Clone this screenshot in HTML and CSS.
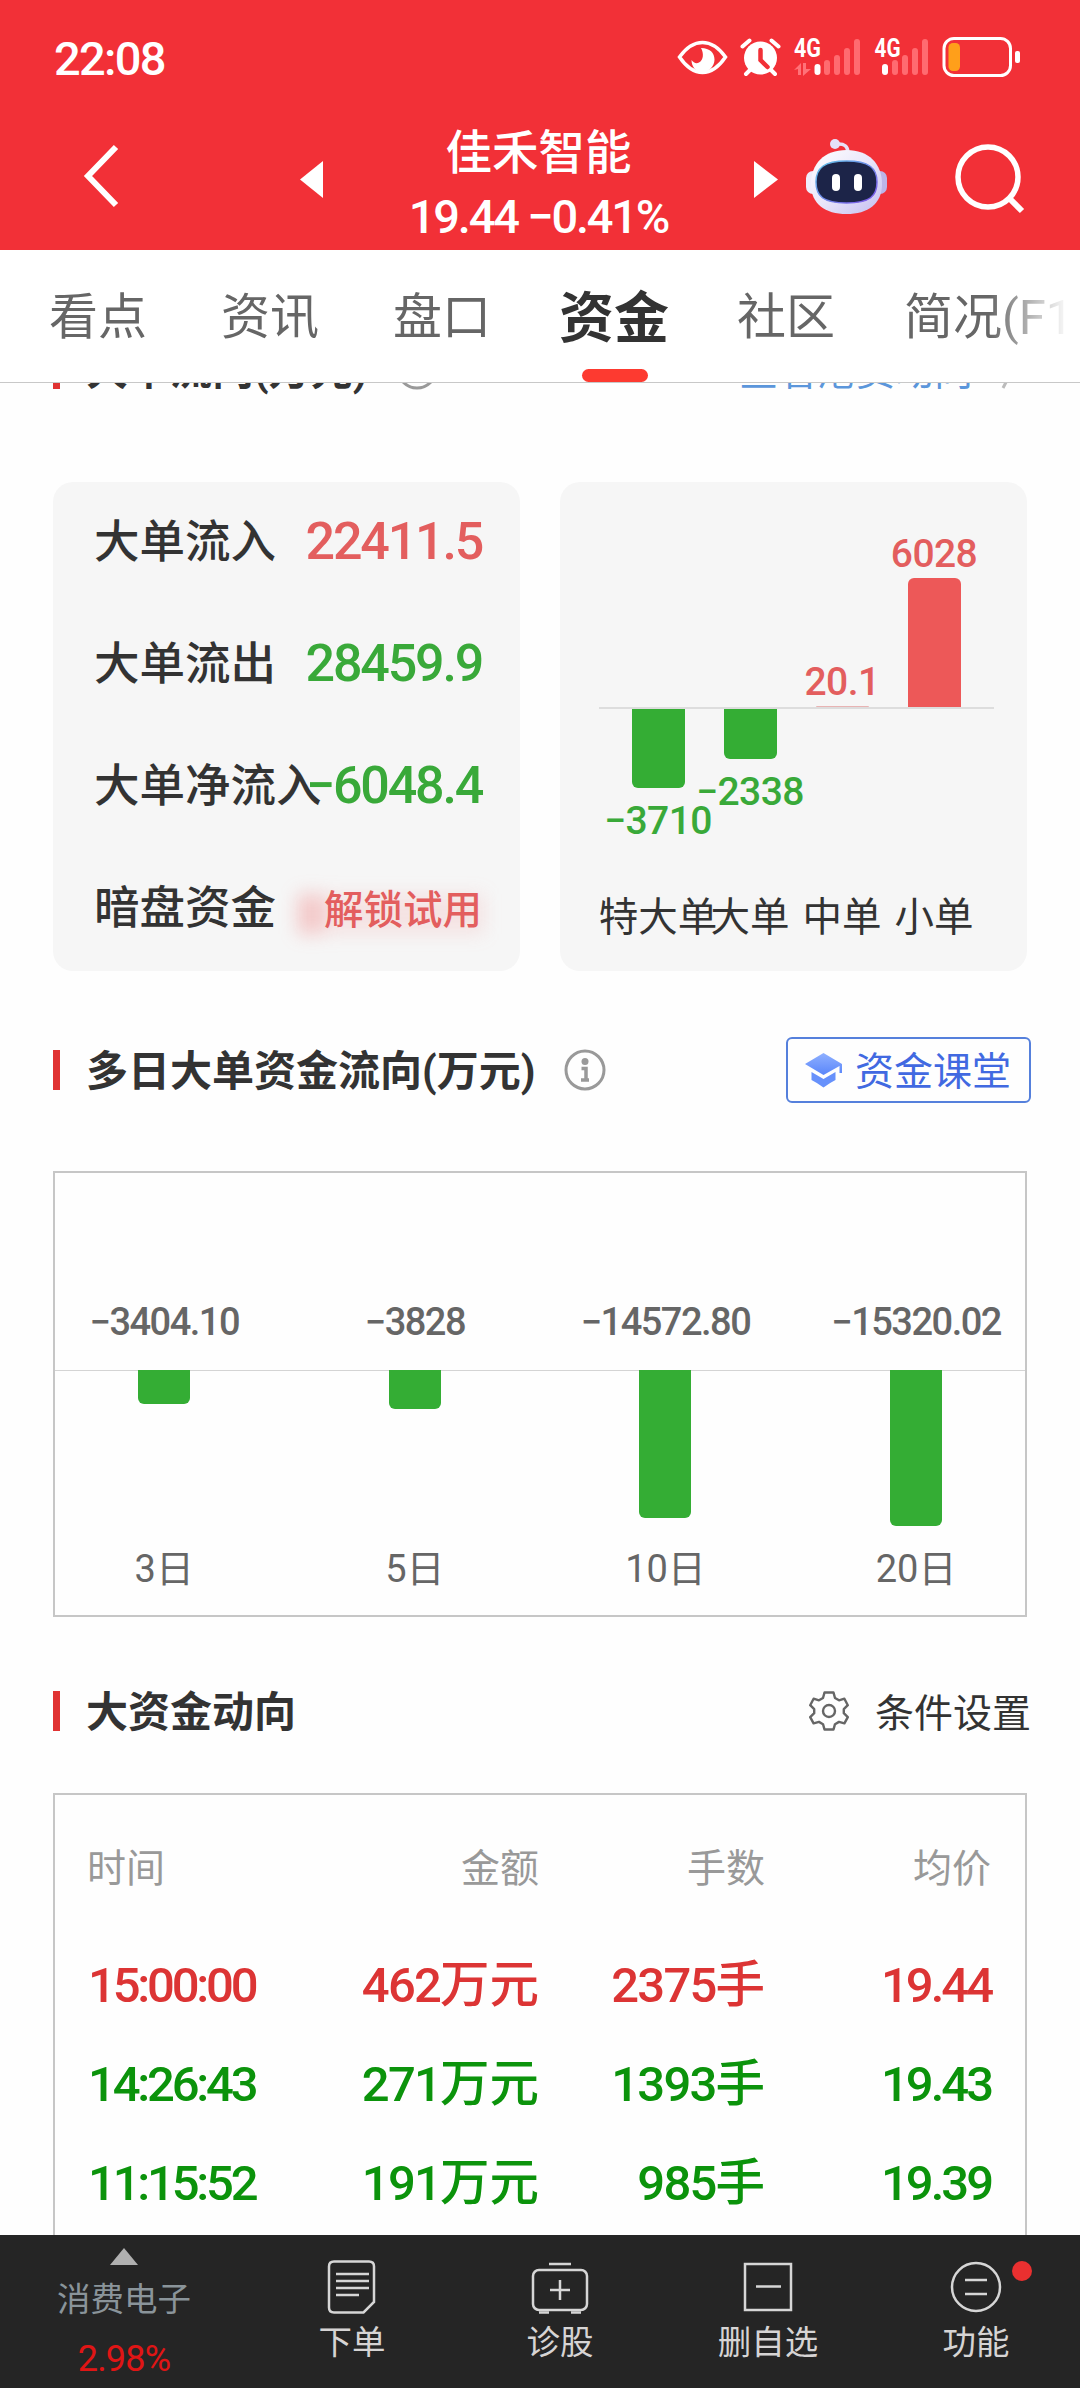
FILE: index.html
```html
<!DOCTYPE html>
<html lang="zh-CN">
<head>
    <meta charset="UTF-8">
    <meta name="viewport" content="width=device-width, initial-scale=1.0">
    <title>佳禾智能 - 资金</title>
    <link rel="stylesheet" href="styles.css">
</head>
<body>
<div class="page">

    <!-- Header -->
    <header class="header">
        <div class="status-bar">
            <span class="clock">22:08</span>
            <svg class="status-icons" width="346" height="44" viewBox="676 35 346 44" fill="none">
                <path d="M680.500 57Q691 42.500 703.500 42.500T726.500 57Q716 72.500 703.500 72.500T680.500 57Z" stroke="#fff" stroke-width="3.500"/>
                <path d="M702 48c9 0 13.500 5 13.500 11.500S710 72 703.500 72 692.500 67 692.500 60c2 3 5 4 7.500 2.500 4.500-2.500 5-9 2-14.500Z" fill="#fff"/>
                <circle cx="761.500" cy="58" r="16.500" fill="#fff"/>
                <path d="M743.500 46.500l7-6M779.500 46.500l-7-6M751 70l-4 4M772 70l4 4" stroke="#fff" stroke-width="4" stroke-linecap="round"/>
                <path d="M761.500 50v10l7 7" stroke="#f23037" stroke-width="4.500" stroke-linecap="round"/>
                <text x="795" y="57" class="net" textLength="27" lengthAdjust="spacingAndGlyphs">4G</text>
                <path d="M795 70l7-7v12h-3v-6zM804 63h3v6h5l-8 7z" fill="#ff7278"/>
                <g stroke-width="6" stroke-linecap="round">
                    <path d="M818.500 67v5" stroke="#fff"/>
                    <path d="M828 63v9M838 58v14M848 51v21M858 42v30" stroke="#ff6b70"/>
                    <path d="M886 67v5" stroke="#fff"/>
                    <path d="M896 63v9M906 58v14M916 51v21M926 42v30" stroke="#ff6b70"/>
                </g>
                <text x="875.500" y="57" class="net" textLength="26" lengthAdjust="spacingAndGlyphs">4G</text>
                <rect x="945" y="38.500" width="66.500" height="37" rx="10" stroke="#fff" stroke-width="3"/>
                <rect x="949.500" y="43" width="11.500" height="28" rx="4.500" fill="#ff9f1a"/>
                <rect x="1016" y="51" width="5" height="12" rx="2" fill="#fff"/>
            </svg>
        </div>
        <nav class="nav">
            <svg class="back" width="40" height="68" viewBox="0 0 40 68"><path d="M34 4L6 33l28 29" fill="none" stroke="#fff" stroke-width="6"/></svg>
            <svg class="prev" width="23" height="37" viewBox="0 0 23 37"><path d="M23 0v37L0 18.500z" fill="#fff"/></svg>
            <div class="stock">
                <h1>佳禾智能</h1>
                <p>19.44 −0.41%</p>
            </div>
            <svg class="next" width="24" height="37" viewBox="0 0 24 37"><path d="M0 0v37l24-18.500z" fill="#fff"/></svg>
            <svg class="robot" width="82" height="76" viewBox="0 0 82 76">
                <defs>
                    <linearGradient id="shell" x1="0" y1="0" x2="1" y2="1">
                        <stop offset="0" stop-color="#fff"/>
                        <stop offset=".5" stop-color="#e9e6fa"/>
                        <stop offset="1" stop-color="#c3bdf0"/>
                    </linearGradient>
                    <linearGradient id="rim" x1="0" y1="0" x2="1" y2="1">
                        <stop offset="0" stop-color="#62c5e8"/>
                        <stop offset="1" stop-color="#7c4fe8"/>
                    </linearGradient>
                </defs>
                <circle cx="29" cy="5" r="5" fill="#e4e0f8"/>
                <path d="M31 5q11-1 11 9" fill="none" stroke="#e8e0f6" stroke-width="3.500"/>
                <rect x="0" y="32" width="14" height="23" rx="7" fill="#efedfb"/>
                <rect x="67" y="32" width="14" height="23" rx="7" fill="#bcb5e8"/>
                <path d="M40.500 11C63 11 76 25 76 45S62 75 40.500 75 5 65 5 45 18 11 40.500 11Z" fill="url(#shell)"/>
                <path d="M40.500 22C63 22 71 29 71 43S64 64 40.500 64 10 57 10 43s8-21 30.500-21Z" fill="#1c2448" stroke="url(#rim)" stroke-width="1.500"/>
                <rect x="26" y="35" width="8" height="17" rx="4" fill="#fff"/>
                <rect x="48" y="35" width="8" height="17" rx="4" fill="#fff"/>
            </svg>
            <svg class="search" width="70" height="70" viewBox="0 0 70 70"><path d="M54 54l13 13" stroke="#fff" stroke-width="6"/><circle cx="33" cy="33" r="30" fill="none" stroke="#fff" stroke-width="5.500"/></svg>
        </nav>
    </header>

    <!-- Tabs -->
    <div class="tabs">
        <span>看点</span>
        <span>资讯</span>
        <span>盘口</span>
        <span class="active">资金</span>
        <span>社区</span>
        <span class="fade">简况(F10)</span>
    </div>

    <!-- Content -->
    <main class="content">
        <div class="title">
            <h2>大单流向(万元)</h2>
            <svg class="info" width="42" height="42" viewBox="0 0 42 42"><circle cx="21" cy="21" r="19" fill="none" stroke="#999" stroke-width="3"/></svg>
            <a class="link">查看港资动向</a>
            <svg class="more" width="14" height="40" viewBox="0 0 14 40"><path d="M2 4l10 16L2 39" fill="none" stroke="#bbb" stroke-width="3"/></svg>
        </div>

        <div class="cards">
            <section class="card summary">
                <div class="line"><span>大单流入</span><b class="up">22411.5</b></div>
                <div class="line"><span>大单流出</span><b class="down">28459.9</b></div>
                <div class="line"><span>大单净流入</span><b class="down">−6048.4</b></div>
                <div class="line"><span>暗盘资金</span><em class="unlock">解锁试用</em></div>
            </section>
            <section class="card orders">
                <div class="above">
                    <div class="col"></div>
                    <div class="col"></div>
                    <div class="col up">20.1<i class="bar thin"></i></div>
                    <div class="col up">6028<i class="bar" style="height: 129px"></i></div>
                </div>
                <div class="below">
                    <div class="col down"><i class="bar" style="height: 79px"></i>−3710</div>
                    <div class="col down"><i class="bar" style="height: 50px"></i>−2338</div>
                </div>
                <div class="names">
                    <span>特大单</span><span>大单</span><span>中单</span><span>小单</span>
                </div>
            </section>
        </div>

        <div class="title title-days">
            <h2>多日大单资金流向(万元)</h2>
            <svg class="info" width="42" height="42" viewBox="0 0 42 42"><circle cx="21" cy="21" r="19" fill="none" stroke="#999" stroke-width="3"/><circle cx="21" cy="12.500" r="3.500" fill="#999"/><path d="M17.500 19.500H22V31M17 31h8" fill="none" stroke="#999" stroke-width="3.500"/></svg>
            <a class="lesson">
                <svg width="38" height="35" viewBox="0 0 38 35">
                    <defs><linearGradient id="cap" x1="0" y1="0" x2="0" y2="1"><stop offset="0" stop-color="#8fb0ff"/><stop offset="1" stop-color="#5a86fa"/></linearGradient></defs>
                    <path d="M18.500 0L37 11v9h-2.500v-7L18.500 22 0 11z" fill="url(#cap)"/>
                    <path d="M6.500 19l12 7 12-7V27q-6 3-12 7.500Q12.500 30 6.500 27z" fill="#6791fb"/>
                </svg>
                <span>资金课堂</span>
            </a>
        </div>

        <section class="days">
            <div class="day"><b>−3404.10</b><div class="drop"><i class="bar" style="height: 34px"></i></div><span>3日</span></div>
            <div class="day"><b>−3828</b><div class="drop"><i class="bar" style="height: 39px"></i></div><span>5日</span></div>
            <div class="day"><b>−14572.80</b><div class="drop"><i class="bar" style="height: 148px"></i></div><span>10日</span></div>
            <div class="day"><b>−15320.02</b><div class="drop"><i class="bar" style="height: 156px"></i></div><span>20日</span></div>
        </section>

        <div class="title title-big">
            <h2>大资金动向</h2>
            <a class="setting">
                <svg width="40" height="40" viewBox="0 0 40 40" fill="none" stroke="#666" stroke-width="2.400" stroke-linejoin="round">
                    <path d="M15.500 1.500h9l1.500 5.500 4 2.300 5.400-1.600 3.400 6.500-4 4v4l4 4-3.400 6.200-5.400-1.500-4 2.300-1.500 5.300h-9L14 33.200l-4-2.300-5.400 1.500-3.400-6.200 4-4v-4l-4-4 3.400-6.500L10 9.300 14 7z"/>
                    <circle cx="20" cy="20" r="6"/>
                </svg>
                <span>条件设置</span>
            </a>
        </div>

        <section class="deals">
            <div class="row head"><span>时间</span><span>金额</span><span>手数</span><span>均价</span></div>
            <div class="row red"><span class="time">15:00:00</span><span>462<i>万元</i></span><span>2375<i>手</i></span><span class="price">19.44</span></div>
            <div class="row green"><span class="time">14:26:43</span><span>271<i>万元</i></span><span>1393<i>手</i></span><span class="price">19.43</span></div>
            <div class="row green"><span class="time">11:15:52</span><span>191<i>万元</i></span><span>985<i>手</i></span><span class="price">19.39</span></div>
        </section>
    </main>

    <!-- Footer -->
    <footer class="toolbar">
        <div class="sector">
            <svg width="28" height="17" viewBox="0 0 28 17"><path d="M14 0l14 17H0z" fill="#b0b0b0"/></svg>
            <span>消费电子</span>
            <b>2.98%</b>
        </div>
        <div class="tool">
            <svg width="60" height="60" viewBox="0 0 60 60"><path d="M12 6.500h35q5 0 5 5V47L41.500 57.500H12q-5 0-5-5v-41q0-5 5-5Z"/><path d="M14 19h33M14 26h33M14 33h33M14 40h23"/></svg>
            下单
        </div>
        <div class="tool">
            <svg width="60" height="60" viewBox="0 0 60 60"><rect x="3" y="15" width="54" height="40" rx="6"/><path d="M19 9h22M30 25v20M20 35h20M9 57.500h10M41 57.500h10"/></svg>
            诊股
        </div>
        <div class="tool">
            <svg width="60" height="60" viewBox="0 0 60 60"><rect x="7" y="9" width="46" height="46"/><path d="M18 31.500h25"/></svg>
            删自选
        </div>
        <div class="tool">
            <svg width="60" height="60" viewBox="0 0 60 60"><circle cx="30" cy="32" r="24"/><path d="M19 25h22M19 39h22"/></svg>
            功能
            <i class="dot"></i>
        </div>
    </footer>

</div>
</body>
</html>
```
FILE: styles.css
```css
* {
    margin: 0;
    padding: 0;
    box-sizing: border-box;
}

body {
    font-family: Roboto, "Noto Sans CJK SC", sans-serif;
    background: #fefefe;
    color: #333;
}

svg {
    display: block;
    flex: none;
}

i,
em {
    font-style: normal;
}

b {
    font-weight: 500;
}

.page {
    width: 1080px;
    height: 2388px;
    display: flex;
    flex-direction: column;
    overflow: hidden;
}

/* Header */
.header {
    height: 250px;
    flex: none;
    background: #f23037;
    color: #fff;
}

.status-bar {
    height: 116px;
    padding: 0 59px 0 54px;
    display: flex;
    justify-content: space-between;
    align-items: center;
}

.clock {
    font-size: 47px;
    font-weight: 500;
    letter-spacing: -1.7px;
}

.status-icons {
    margin-bottom: 2px;
}

.net {
    font-size: 25px;
    font-weight: 700;
    fill: #fff;
}

.nav {
    height: 134px;
    padding-left: 82px;
    display: flex;
    align-items: flex-start;
}

.back {
    margin-top: 27px;
}

.prev {
    margin: 45px 0 0 178px;
}

.stock {
    width: 431px;
    text-align: center;
    white-space: nowrap;
}

.stock h1 {
    font-size: 46.500px;
    font-weight: 500;
    line-height: 60px;
    margin-top: 7px;
}

.stock p {
    font-size: 47px;
    font-weight: 500;
    line-height: 60px;
    margin-top: 4px;
    letter-spacing: -2.2px;
}

.next {
    margin-top: 45px;
}

.robot {
    margin: 23px 0 0 28px;
}

.search {
    margin: 28px 0 0 67px;
}

/* Tabs */
.tabs {
    height: 133px;
    flex: none;
    padding-left: 49px;
    display: flex;
    align-items: center;
    background: #fff;
    border-bottom: 1px solid #c8c8c8;
    font-size: 49px;
    color: #666;
    white-space: nowrap;
}

.tabs span {
    width: 172px;
    height: 132px;
    flex: none;
    line-height: 135px;
}

.tabs .active {
    position: relative;
    width: 172px;
    margin-left: -6px;
    font-size: 55px;
    font-weight: 700;
    line-height: 137px;
    color: #333;
}

.tabs .active::after {
    content: "";
    position: absolute;
    left: 23px;
    bottom: 0;
    width: 66px;
    height: 13px;
    border-radius: 7px;
    background: #fd3a30;
}

.tabs .active + span {
    margin-left: 6px;
    width: 167px;
}

.tabs .fade {
    width: 165px;
    overflow: hidden;
    -webkit-mask-image: linear-gradient(to right, #000 85px, transparent);
    mask-image: linear-gradient(to right, #000 85px, transparent);
}

/* Content */
.content {
    flex: 1;
    min-height: 0;
    padding: 0 53px;
    overflow: hidden;
}

.title {
    height: 66px;
    margin-top: -47px;
    margin-right: -4px;
    display: flex;
    align-items: center;
    font-size: 39px;
}

.title::before {
    content: "";
    width: 7px;
    height: 40px;
    margin-right: 26px;
    background: #e03333;
}

.title h2 {
    font-size: 42px;
    font-weight: 700;
    line-height: 66px;
    padding-top: 3px;
}

.title .info {
    margin-left: 29px;
}

.title a {
    margin-left: auto;
}

.link {
    color: #5b96db;
    padding-bottom: 3px;
}

.more {
    margin: 0 16px 0 28px;
}

.cards {
    margin-top: 80px;
    display: flex;
    gap: 40px;
}

.card {
    width: 467px;
    height: 489px;
    border-radius: 20px;
    background: #f6f6f6;
}

.summary {
    padding: 0 38px 0 41px;
}

.line {
    height: 122px;
    display: flex;
    justify-content: space-between;
    white-space: nowrap;
    font-size: 45.500px;
    font-weight: 500;
    line-height: 121px;
}

.line span {
    width: 200px;
}

.line b {
    font-size: 52px;
    line-height: 119px;
    letter-spacing: -2.2px;
}

.up {
    color: #e35e5e;
}

.down {
    color: #39a939;
}

.unlock {
    position: relative;
    font-size: 39.500px;
    color: #e35e5e;
    line-height: 126px;
    z-index: 0;
}

/* soft glow of the locked value */
.unlock::before {
    content: "";
    position: absolute;
    z-index: -1;
    left: -26px;
    right: -2px;
    top: 46px;
    height: 40px;
    background: linear-gradient(to right, rgba(240, 110, 110, .34) 18px, rgba(240, 130, 130, .16) 32px);
    filter: blur(9px);
}

.orders {
    font-size: 39px;
    font-weight: 500;
    line-height: 41px;
    letter-spacing: -.6px;
}

.above,
.below,
.names {
    width: 395px;
    margin-left: 39px;
    padding-left: 13px;
    display: flex;
    white-space: nowrap;
}

.above {
    height: 227px;
    align-items: flex-end;
    border-bottom: 2px solid #ddd;
}

.below {
    height: 188px;
}

.names {
    font-size: 39.500px;
    font-weight: 400;
    letter-spacing: 0;
}

.col,
.names span {
    width: 92px;
    flex: none;
    display: flex;
    flex-direction: column;
    align-items: center;
}

.bar {
    width: 53px;
    flex: none;
    background: #34ad34;
}

.above .bar {
    margin-top: 3px;
    border-radius: 6px 6px 0 0;
    background: #ed5858;
}

.above .thin {
    height: 1px;
    background: #e8b4b4;
}

.below .bar {
    margin-bottom: 13px;
    border-radius: 0 0 6px 6px;
}

/* Multi-day flow */
.title-days {
    margin-top: 66px;
}

.lesson {
    width: 245px;
    height: 66px;
    padding-left: 17px;
    display: flex;
    align-items: center;
    gap: 12px;
    border: 2px solid #5580dc;
    border-radius: 6px;
    color: #4169e1;
}

.lesson span {
    padding-bottom: 4px;
}

.days {
    height: 446px;
    margin-top: 68px;
    border: 2px solid #c6c6c6;
    display: flex;
    overflow: hidden;
    font-size: 38px;
    color: #666;
}

.day {
    width: 250.600px;
    flex: none;
    display: flex;
    flex-direction: column;
    align-items: center;
    line-height: 40px;
}

/* bars sit under the left part of each quarter */
.days::before {
    content: "";
    width: 0;
    margin-left: -16px;
}

.day b {
    height: 197px;
    padding-top: 129px;
    letter-spacing: -1.5px;
}

.drop {
    width: 100%;
    height: 180px;
    display: flex;
    justify-content: center;
    border-top: 1px solid #d4d4d4;
}

.drop .bar {
    width: 52px;
    margin-top: -1px;
    border-radius: 0 0 6px 6px;
}

.day span {
    margin-top: -1px;
    line-height: 40px;
}

/* Deals */
.title-big {
    margin-top: 61px;
}

.setting {
    display: flex;
    align-items: center;
    gap: 26px;
}

.setting span {
    padding-bottom: 2px;
}

.deals {
    height: 700px;
    margin-top: 49px;
    padding: 0 34px 0 32px;
    border: 2px solid #c6c6c6;
}

.row {
    display: grid;
    grid-template-columns: 200px 252px 226px 226px;
    text-align: right;
    font-size: 49px;
    font-weight: 500;
    line-height: 99px;
    letter-spacing: -1.8px;
    white-space: nowrap;
}

.row span:first-child {
    text-align: left;
}

.row i {
    font-size: 49.500px;
    letter-spacing: 0;
}

.head {
    padding: 53px 0 46px;
    font-size: 39px;
    font-weight: 400;
    line-height: 42px;
    letter-spacing: 0;
    color: #999;
}

.row .time {
    padding-left: 1px;
    letter-spacing: -3.2px;
}

.row .price {
    letter-spacing: -3px;
}

.red {
    color: #dc3434;
}

.green {
    color: #0b930b;
}

/* Footer */
.toolbar {
    height: 153px;
    flex: none;
    display: flex;
    background: #252525;
    color: #d6d4d4;
    font-size: 33.500px;
}

.sector {
    width: 248px;
    padding-top: 13px;
    display: flex;
    flex-direction: column;
    align-items: center;
    color: #8a949a;
    line-height: 40px;
}

.sector span {
    margin-top: 15px;
}

.sector b {
    margin-top: 19px;
    font-size: 36px;
    font-weight: 400;
    letter-spacing: -.8px;
    color: #e01515;
}

.tool {
    position: relative;
    width: 208px;
    padding-top: 20px;
    text-align: center;
    line-height: 40px;
}

.tool svg {
    margin: 0 auto 8px;
    fill: none;
    stroke: #d6d6d6;
    stroke-width: 2.500px;
}

.dot {
    position: absolute;
    top: 26px;
    left: 140px;
    width: 20px;
    height: 20px;
    border-radius: 50%;
    background: #ea3030;
}
```
